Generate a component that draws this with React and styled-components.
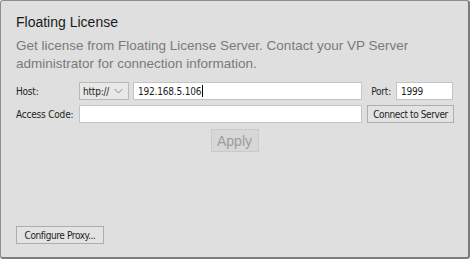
import styled, { createGlobalStyle } from "styled-components"

const Global = createGlobalStyle`
    html, body {
        margin: 0;
        padding: 0;
        background: #ffffff;
    }
    * {
        box-sizing: border-box;
    }
`

export default function App(){
    return (
    <>
    <Global />
    <Panel>
        <Title>Floating License</Title>
        <Descricao>
            Get license from Floating License Server. Contact your VP Server administrator for connection information.
        </Descricao>
        <Formulario>
            <Linha>
                <Rotulo>Host:</Rotulo>
                <Seletor>
                    <span>http://</span>
                    <svg width="9" height="6" viewBox="0 0 9 6">
                        <path d="M0.5 1 L4.5 5 L8.5 1" fill="none" stroke="#8a8a8a" strokeWidth="1" />
                    </svg>
                </Seletor>
                <Campo $flex>
                    192.168.5.106<Cursor />
                </Campo>
                <RotuloPorta>Port:</RotuloPorta>
                <Campo $largura={57}>1999</Campo>
            </Linha>
            <Linha>
                <Rotulo>Access Code:</Rotulo>
                <Campo $largura={283} />
                <Botao $largura={87}>Connect to Server</Botao>
            </Linha>
        </Formulario>
        <AreaAplicar>
            <BotaoAplicar disabled>Apply</BotaoAplicar>
        </AreaAplicar>
        <Rodape>
            <Botao $largura={88}>Configure Proxy...</Botao>
        </Rodape>
    </Panel>
    </>
    )
}

const fonteControle = `
    font-family: "DejaVu Sans Condensed", "DejaVu Sans", "Liberation Sans", sans-serif;
    font-stretch: condensed;
    font-size: 10px;
    letter-spacing: -0.2px;
    color: #1e1e1e;
    white-space: nowrap;
`

const Panel = styled.div`
    width: 470px;
    height: 259px;
    background: #dfdfdf;
    border: 1px solid #8d8d8d;
    border-right: 2px solid #7c7c7c;
    border-bottom: 2px solid #7c7c7c;
    border-radius: 3px;
    padding: 12px 15px 13px 15px;
    display: flex;
    flex-direction: column;
`
const Title = styled.h1`
    margin: 0;
    font-family: "Liberation Sans", sans-serif;
    font-weight: 400;
    font-size: 14px;
    line-height: 18px;
    color: #1a1a1a;
`
const Descricao = styled.p`
    margin: 6px 0 0 0;
    font-family: "Liberation Sans", sans-serif;
    font-size: 13.5px;
    line-height: 18px;
    color: #7a7a7a;
    width: 400px;
`
const Formulario = styled.div`
    margin-top: 9px;
    display: flex;
    flex-direction: column;
    gap: 5px;
`
const Linha = styled.div`
    display: flex;
    align-items: center;
    height: 18px;
`
const Rotulo = styled.span`
    width: 63px;
    flex-shrink: 0;
    ${fonteControle}
`
const RotuloPorta = styled(Rotulo)`
    width: auto;
    margin: 0 5px 0 9px;
`
const Seletor = styled.div`
    width: 50px;
    height: 18px;
    margin-right: 4px;
    flex-shrink: 0;
    background: #e8e8e8;
    border: 1px solid #b9b9b9;
    display: flex;
    align-items: center;
    justify-content: space-between;
    padding: 0 5px 0 3px;
    ${fonteControle}
`
const Campo = styled.div`
    height: 18px;
    ${props => props.$flex ? "flex: 1;" : `width: ${props.$largura}px; flex-shrink: 0;`}
    background: #ffffff;
    border: 1px solid #c4c4c4;
    display: flex;
    align-items: center;
    padding: 0 4px;
    ${fonteControle}
`
const Cursor = styled.span`
    display: inline-block;
    width: 1px;
    height: 12px;
    background: #000000;
    margin-left: 1px;
`
const Botao = styled.button`
    width: ${props => props.$largura}px;
    height: 18px;
    margin-left: 5px;
    flex-shrink: 0;
    padding: 0;
    background: #e3e3e3;
    border: 1px solid #adadad;
    display: flex;
    align-items: center;
    justify-content: center;
    ${fonteControle}
    letter-spacing: -0.4px;
`
const AreaAplicar = styled.div`
    display: flex;
    justify-content: center;
    margin-top: 6px;
`
const BotaoAplicar = styled.button`
    width: 48px;
    height: 23px;
    padding: 0;
    background: #d7d7d7;
    border: 1px solid #cacaca;
    font-family: "Liberation Sans", sans-serif;
    font-size: 14px;
    color: #9c9c9c;
`
const Rodape = styled.div`
    margin-top: auto;
    display: flex;
    & > button {
        margin-left: 0;
    }
`
